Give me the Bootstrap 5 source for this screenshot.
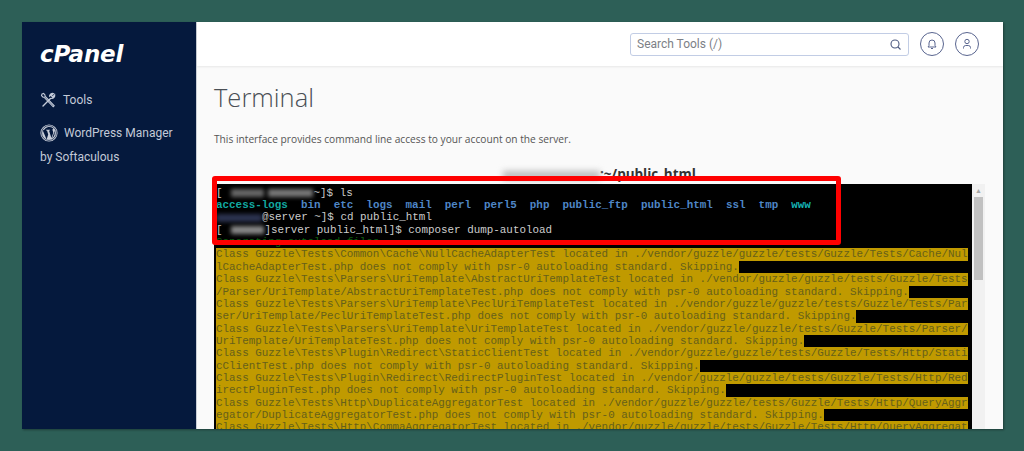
<!DOCTYPE html>
<html lang="en">
<head>
<meta charset="utf-8">
<title>Terminal</title>
<link href="https://cdn.jsdelivr.net/npm/bootstrap@5.3.0/dist/css/bootstrap.min.css" rel="stylesheet">
<style>
html,body{height:451px;overflow:hidden}
body{background:#2d5f57;padding:22px 21px 22px 22px;font-family:"Open Sans",sans-serif}
.app-win{height:407px;overflow:hidden;background:#fafafa;box-shadow:1px 1px 2px rgba(0,0,0,.35)}
.side-bar{width:175px;background:#05193d;color:#c3cad8;font:12px/1 Roboto,sans-serif;padding:0 18px;border-right:1px solid #c9ced6}
.logo-txt{font:italic 700 23px/1 "DejaVu Sans",sans-serif;color:#fff;letter-spacing:-.2px;margin-top:21px;height:25px}
.side-item{height:18px;gap:7px}
.top-bar{height:44px;background:#fff;box-shadow:0 1px 2px rgba(0,0,0,.08);padding-right:24px;gap:10px}
.search-box{width:279px;height:23px;border:1px solid #c2cde5;border-radius:3px;padding:0 7px 0 6px;font:12px/1 Roboto,sans-serif;color:#7d7f86}
.round-btn{width:24px;height:24px;border:1px solid #59658f;border-radius:50%;margin-left:1px}
.main-pane{padding-left:17px;padding-right:18px;min-height:0}
.page-title{font:300 25.500px/26px "Open Sans",sans-serif;color:#4a4f55;margin:18px 0 0}
.page-desc{font-size:10.2px;line-height:14px;color:#555;margin:22px 0 0}
.cwd-line{font-size:13.5px;font-weight:700;line-height:16px;color:#333;margin:20px 0 0;height:18px;white-space:nowrap}
.cwd-blur{display:inline-block;width:97px;height:9px;background:#bbb;filter:blur(3px);vertical-align:middle}
.term-wrap{width:771px;flex:1 1 auto;min-height:0}
.term-screen{background:#000;width:758px;padding:3px 0 0 2px;font:10.9px/12.37px "Liberation Mono",monospace;color:#ccc;overflow:hidden;white-space:pre}
.term-ln{display:block;height:12.37px}
.ls-row{font-weight:700}
.dir-b{color:#4f86c6}
.dir-c{color:#16b5b5}
.dir-t{color:#12a8a0}
.dim-g{color:#0d5f0d}
.warn-hl{background:#c09a00;color:#66601a;display:inline-block;height:12.37px;vertical-align:top}
.fuzz{display:inline-block;height:8px;background:#666;filter:blur(2px);vertical-align:middle}
.fz-a{width:33px;margin:0 4px 0 8px}
.fz-d{width:45px;margin-right:1px;background:#777}
.fz-b{width:46px;background:#2c3350}
.fz-c{width:33px;margin:0 1px 0 8px;background:#888}
.scroll-rail{width:13px;background:#f1f1f1}
.scroll-up{height:13px;color:#a5a5a5;font-size:7px;line-height:13px;text-align:center}
.scroll-thumb{height:83px;width:9px;background:#c1c1c1;margin:0 auto}
.red-frame{position:absolute;left:-2px;top:-8px;width:629px;height:69px;border:5.5px solid #f00;border-radius:3px;pointer-events:none}
</style>
</head>
<body>
<div class="app-win d-flex">
  <aside class="side-bar flex-shrink-0">
    <div class="logo-txt">cPanel</div>
    <div class="side-item d-flex align-items-center" style="margin-top:23px">
      <svg width="16" height="16" viewBox="0 0 16 16" fill="none" stroke="#c3cad8" stroke-width="1.4" stroke-linecap="round"><path d="M3 14 10.5 6.5"/><path d="M9.6 4.2A3 3 0 0 1 13.2 1.6L11.2 3.6l1.4 1.4 2-2A3 3 0 0 1 11.700 6.400"/><path d="M2 2l1.6-.6L5 3v1.2L14.2 13.8 13.2 14.800 4 5.200H3L1.500 3.600z" stroke-width="1.1"/></svg>
      <span>Tools</span>
    </div>
    <div class="side-item d-flex align-items-center" style="margin-top:15px;gap:6px">
      <svg width="18" height="18" viewBox="0 0 18 18"><circle cx="9" cy="9" r="8.6" fill="#c9ced9"/><circle cx="9" cy="9" r="7.4" fill="none" stroke="#05193d" stroke-width=".7"/><path d="M2.800 6.400 6.600 15.600 8.200 10.600 7 6.400H6V5.800H10V6.400H9L11.400 14 13 9.400C13.500 7.700 12.600 7 12.500 6 12.400 5.200 13 4.800 13.600 4.800L13 4.200A6 6 0 0 0 4.200 5.800Z" fill="#05193d"/><path d="M14.200 6.500C15.400 9 14.600 12.400 12 14.600L13.800 9.400C14.200 8.200 14.300 7.300 14.200 6.500Z" fill="#05193d"/></svg>
      <span>WordPress Manager</span>
    </div>
    <div style="margin-top:8px;line-height:14px">by Softaculous</div>
  </aside>
  <div class="flex-grow-1 d-flex flex-column" style="min-width:0">
    <header class="top-bar d-flex align-items-center justify-content-end flex-shrink-0">
      <div class="search-box d-flex align-items-center justify-content-between">
        <span>Search Tools (/)</span>
        <svg width="11" height="11" viewBox="0 0 11 11" fill="none" stroke="#4d5a80" stroke-width="1.1"><circle cx="5" cy="5" r="4"/><path d="M8 8l2.500 2.500"/></svg>
      </div>
      <div class="round-btn d-flex align-items-center justify-content-center">
        <svg width="12" height="12" viewBox="0 0 12 12" fill="none" stroke="#59658f" stroke-width="1"><path d="M2 9h8L9 7.500V5A3 3 0 0 0 3 5v2.500z"/><path d="M5 10.500h2"/></svg>
      </div>
      <div class="round-btn d-flex align-items-center justify-content-center">
        <svg width="12" height="12" viewBox="0 0 12 12" fill="none" stroke="#59658f" stroke-width="1"><circle cx="6" cy="3.500" r="2.200"/><path d="M2.500 10.500V9.500A2.200 2.200 0 0 1 4.700 7.500h2.600A2.200 2.200 0 0 1 9.500 9.500v1"/></svg>
      </div>
    </header>
    <main class="main-pane flex-grow-1 d-flex flex-column">
      <h1 class="page-title">Terminal</h1>
      <p class="page-desc">This interface provides command line access to your account on the server.</p>
      <div class="cwd-line text-center"><span class="cwd-blur"></span>:~/public_html</div>
      <div class="term-wrap d-flex position-relative">
        <div class="term-screen"><span class="term-ln">[<span class="fuzz fz-a"></span><span class="fuzz fz-d"></span>~]$ ls</span><span class="term-ln ls-row"><span class="dir-t">access-logs</span>  <span class="dir-b">bin</span>  <span class="dir-b">etc</span>  <span class="dir-b">logs</span>  <span class="dir-b">mail</span>  <span class="dir-b">perl</span>  <span class="dir-b">perl5</span>  <span class="dir-b">php</span>  <span class="dir-b">public_ftp</span>  <span class="dir-b">public_html</span>  <span class="dir-b">ssl</span>  <span class="dir-b">tmp</span>  <span class="dir-c">www</span></span><span class="term-ln"><span class="fuzz fz-b"></span>@server ~]$ cd public_html</span><span class="term-ln">[<span class="fuzz fz-c"></span>]server public_html]$ composer dump-autoload</span><span class="term-ln dim-g">Generating autoload files</span><span class="term-ln"><span class="warn-hl">Class Guzzle\Tests\Common\Cache\NullCacheAdapterTest located in ./vendor/guzzle/guzzle/tests/Guzzle/Tests/Cache/Nul</span></span><span class="term-ln"><span class="warn-hl">lCacheAdapterTest.php does not comply with psr-0 autoloading standard. Skipping.</span></span><span class="term-ln"><span class="warn-hl">Class Guzzle\Tests\Parsers\UriTemplate\AbstractUriTemplateTest located in ./vendor/guzzle/guzzle/tests/Guzzle/Tests</span></span><span class="term-ln"><span class="warn-hl">/Parser/UriTemplate/AbstractUriTemplateTest.php does not comply with psr-0 autoloading standard. Skipping.</span></span><span class="term-ln"><span class="warn-hl">Class Guzzle\Tests\Parsers\UriTemplate\PeclUriTemplateTest located in ./vendor/guzzle/guzzle/tests/Guzzle/Tests/Par</span></span><span class="term-ln"><span class="warn-hl">ser/UriTemplate/PeclUriTemplateTest.php does not comply with psr-0 autoloading standard. Skipping.</span></span><span class="term-ln"><span class="warn-hl">Class Guzzle\Tests\Parsers\UriTemplate\UriTemplateTest located in ./vendor/guzzle/guzzle/tests/Guzzle/Tests/Parser/</span></span><span class="term-ln"><span class="warn-hl">UriTemplate/UriTemplateTest.php does not comply with psr-0 autoloading standard. Skipping.</span></span><span class="term-ln"><span class="warn-hl">Class Guzzle\Tests\Plugin\Redirect\StaticClientTest located in ./vendor/guzzle/guzzle/tests/Guzzle/Tests/Http/Stati</span></span><span class="term-ln"><span class="warn-hl">cClientTest.php does not comply with psr-0 autoloading standard. Skipping.</span></span><span class="term-ln"><span class="warn-hl">Class Guzzle\Tests\Plugin\Redirect\RedirectPluginTest located in ./vendor/guzzle/guzzle/tests/Guzzle/Tests/Http/Red</span></span><span class="term-ln"><span class="warn-hl">irectPluginTest.php does not comply with psr-0 autoloading standard. Skipping.</span></span><span class="term-ln"><span class="warn-hl">Class Guzzle\Tests\Http\DuplicateAggregatorTest located in ./vendor/guzzle/guzzle/tests/Guzzle/Tests/Http/QueryAggr</span></span><span class="term-ln"><span class="warn-hl">egator/DuplicateAggregatorTest.php does not comply with psr-0 autoloading standard. Skipping.</span></span><span class="term-ln"><span class="warn-hl">Class Guzzle\Tests\Http\CommaAggregatorTest located in ./vendor/guzzle/guzzle/tests/Guzzle/Tests/Http/QueryAggregat</span></span></div>
        <div class="scroll-rail flex-shrink-0">
          <div class="scroll-up">&#9650;</div>
          <div class="scroll-thumb"></div>
        </div>
        <div class="red-frame"></div>
      </div>
    </main>
  </div>
</div>
<script src="https://cdn.jsdelivr.net/npm/bootstrap@5.3.0/dist/js/bootstrap.bundle.min.js"></script>
</body>
</html>
